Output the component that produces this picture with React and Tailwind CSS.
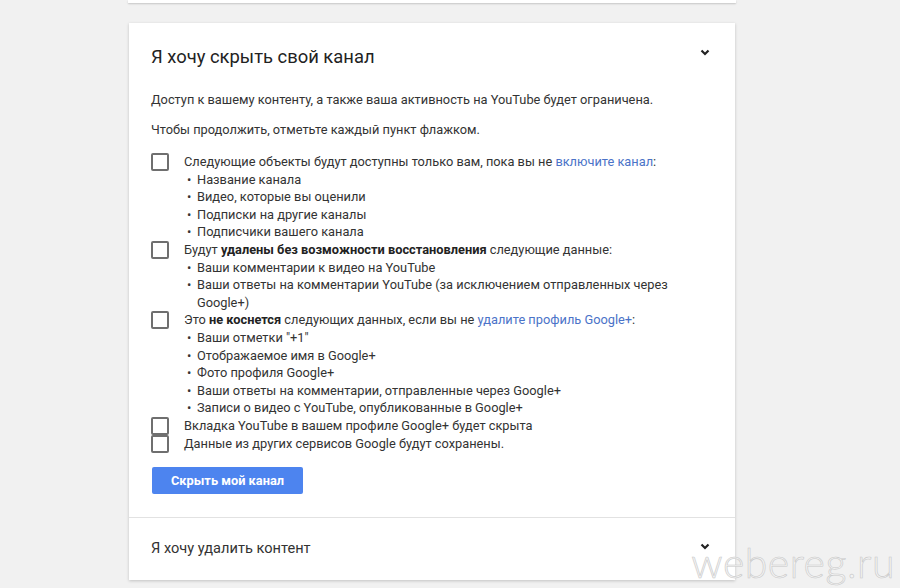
import React from "react";

const Chevron = () => (
  <svg width="10" height="7" viewBox="0 0 10 7" className="block">
    <polyline points="1.5,1.5 5,5 8.5,1.5" fill="none" stroke="#222" strokeWidth="2.2" />
  </svg>
);

const Box = () => (
  <div className="w-[18px] h-[18px] shrink-0 border-2 border-[#6f6f6f] rounded-[2px] bg-white" />
);

const Bullet = ({ children }) => (
  <div className="flex">
    <span className="w-[13px] shrink-0 pl-[3px]">•</span>
    <span>{children}</span>
  </div>
);

const Row = ({ head, items }) => (
  <div className="flex gap-[15px] items-start">
    <Box />
    <div className="flex-1">
      <div>{head}</div>
      {items && items.map((t, i) => <Bullet key={i}>{t}</Bullet>)}
    </div>
  </div>
);

export default function App() {
  return (
    <div
      className="relative w-[900px] h-[588px] bg-[#f1f1f1] overflow-hidden"
      style={{ fontFamily: "Roboto, 'Noto Sans', sans-serif" }}
    >
      <div className="ml-[128px] w-[608px] h-[3px] bg-white shadow-[0_1px_2px_rgba(0,0,0,0.18)]" />
      <div className="ml-[129px] mt-[20px] w-[606px] bg-white shadow-[0_1px_3px_rgba(0,0,0,0.2)]">
        <div className="px-[22px] pt-[22px] pb-[23px]">
          <div className="flex items-center justify-between">
            <div className="text-[18.4px] leading-[24px] text-[#222]">Я хочу скрыть свой канал</div>
            <div className="mr-[3px] -mt-[9px]"><Chevron /></div>
          </div>
          <div className="text-[12.8px] leading-[17.6px] text-[#333]">
            <div className="mt-[22px]">Доступ к вашему контенту, а также ваша активность на YouTube будет ограничена.</div>
            <div className="mt-[12.4px]">Чтобы продолжить, отметьте каждый пункт флажком.</div>
            <div className="mt-[14.4px]">
              <Row
                head={<>Следующие объекты будут доступны только вам, пока вы не <span className="text-[#4b73c8]">включите канал</span>:</>}
                items={["Название канала", "Видео, которые вы оценили", "Подписки на другие каналы", "Подписчики вашего канала"]}
              />
              <Row
                head={<>Будут <b className="font-bold text-[#222]">удалены без возможности восстановления</b> следующие данные:</>}
                items={["Ваши комментарии к видео на YouTube", "Ваши ответы на комментарии YouTube (за исключением отправленных через Google+)"]}
              />
              <Row
                head={<>Это <b className="font-bold text-[#222]">не коснется</b> следующих данных, если вы не <span className="text-[#4b73c8]">удалите профиль Google+</span>:</>}
                items={["Ваши отметки \"+1\"", "Отображаемое имя в Google+", "Фото профиля Google+", "Ваши ответы на комментарии, отправленные через Google+", "Записи о видео с YouTube, опубликованные в Google+"]}
              />
              <Row head="Вкладка YouTube в вашем профиле Google+ будет скрыта" />
              <Row head="Данные из других сервисов Google будут сохранены." />
            </div>
            <button className="mt-[14px] ml-[1px] w-[151px] h-[27px] rounded-[2px] bg-[#4d84ef] text-white text-[12.8px] font-bold flex items-center justify-center">
              Скрыть мой канал
            </button>
          </div>
        </div>
        <div className="h-px bg-[#e2e2e2]" />
        <div className="px-[22px] h-[62px] flex items-center justify-between">
          <div className="text-[14.6px] text-[#333]">Я хочу удалить контент</div>
          <div className="mr-[3px] -mt-[4px]"><Chevron /></div>
        </div>
      </div>
      <div
        className="absolute right-[5px] bottom-[0px] text-[41px] leading-[50px] font-light tracking-[0.5px]"
        style={{ fontFamily: "Lato, 'Open Sans', sans-serif", WebkitTextStroke: "0.6px #c8c8c8", color: "#f4f4f4" }}
      >
        webereg.ru
      </div>
    </div>
  );
}
